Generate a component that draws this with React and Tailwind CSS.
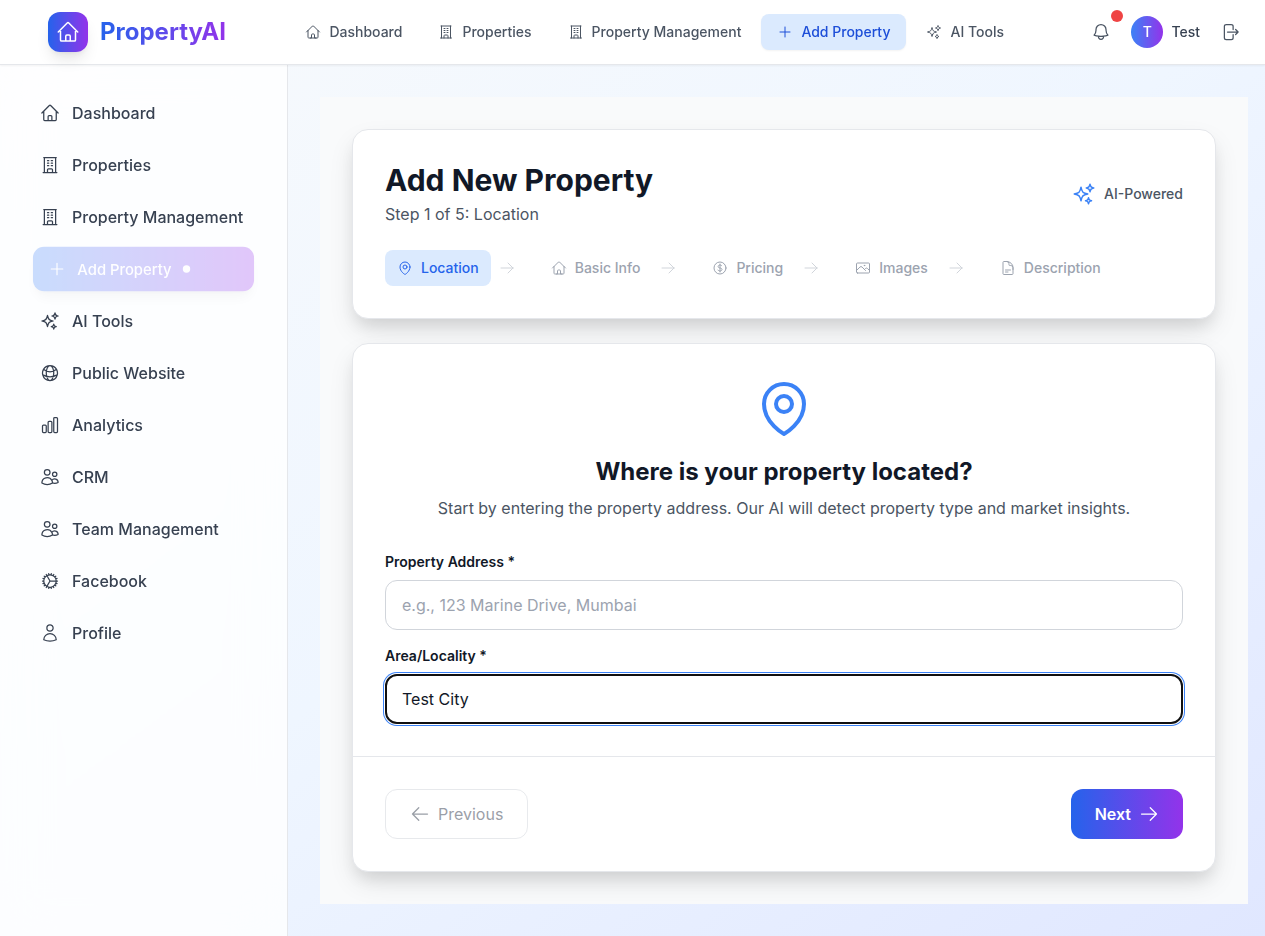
import {
  HiOutlineArrowLeft,
  HiOutlineArrowRight,
  HiOutlineArrowRightOnRectangle,
  HiOutlineBell,
  HiOutlineBuildingOffice,
  HiOutlineChartBar,
  HiOutlineCog,
  HiOutlineCurrencyDollar,
  HiOutlineDocumentText,
  HiOutlineGlobeAlt,
  HiOutlineHome,
  HiOutlineMapPin,
  HiOutlinePhoto,
  HiOutlinePlus,
  HiOutlineSparkles,
  HiOutlineUser,
  HiOutlineUsers,
} from "react-icons/hi2";

const topLinks = [
  { label: "Dashboard", icon: HiOutlineHome },
  { label: "Properties", icon: HiOutlineBuildingOffice },
  { label: "Property Management", icon: HiOutlineBuildingOffice },
  { label: "Add Property", icon: HiOutlinePlus, active: true },
  { label: "AI Tools", icon: HiOutlineSparkles },
];

const sideLinks = [
  { label: "Dashboard", icon: HiOutlineHome },
  { label: "Properties", icon: HiOutlineBuildingOffice },
  { label: "Property Management", icon: HiOutlineBuildingOffice },
  { label: "Add Property", icon: HiOutlinePlus, active: true },
  { label: "AI Tools", icon: HiOutlineSparkles },
  { label: "Public Website", icon: HiOutlineGlobeAlt },
  { label: "Analytics", icon: HiOutlineChartBar },
  { label: "CRM", icon: HiOutlineUsers },
  { label: "Team Management", icon: HiOutlineUsers },
  { label: "Facebook", icon: HiOutlineCog },
  { label: "Profile", icon: HiOutlineUser },
];

const steps = [
  { label: "Location", icon: HiOutlineMapPin },
  { label: "Basic Info", icon: HiOutlineHome },
  { label: "Pricing", icon: HiOutlineCurrencyDollar },
  { label: "Images", icon: HiOutlinePhoto },
  { label: "Description", icon: HiOutlineDocumentText },
];

function Header() {
  return (
    <header className="relative z-10 flex h-[65px] shrink-0 items-center border-b border-[#e5e7eb] bg-white/95 pr-[17px] pl-12 shadow-xs backdrop-blur-xl">
      <div className="flex w-[241.4px] shrink-0 items-center gap-3">
        <div className="flex size-10 items-center justify-center rounded-xl bg-linear-to-r/srgb from-[#2563eb] to-[#9333ea] text-white shadow-lg">
          <HiOutlineHome className="size-6" />
        </div>
        <span className="bg-linear-to-r/srgb from-[#2563eb] to-[#9333ea] bg-clip-text text-2xl font-bold text-transparent">
          PropertyAI
        </span>
      </div>
      <nav className="flex items-center gap-1">
        {topLinks.map(({ label, icon: Icon, active }) => (
          <a
            key={label}
            className={
              active
                ? "flex items-center gap-2 rounded-lg bg-[#dbeafe] px-4 py-2 text-sm font-medium whitespace-nowrap text-[#1d4ed8] shadow-xs"
                : "flex items-center gap-2 rounded-lg px-4 py-2 text-sm font-medium whitespace-nowrap text-[#4b5563]"
            }
          >
            <Icon className="size-4" />
            {label}
          </a>
        ))}
      </nav>
      <div className="ml-auto flex items-center">
        <button className="relative p-2 text-[#4b5563]">
          <HiOutlineBell className="size-5" />
          <span className="absolute -top-1 -right-1 size-3 rounded-full bg-[#ef4444]" />
        </button>
        <div className="ml-3 flex items-center gap-2">
          <div className="flex size-8 items-center justify-center rounded-full bg-linear-to-r/srgb from-[#3b82f6] to-[#9333ea] text-sm font-medium text-white">
            T
          </div>
          <span className="text-sm font-medium text-[#374151]">Test</span>
        </div>
        <button className="ml-3 p-2 text-[#4b5563]">
          <HiOutlineArrowRightOnRectangle className="size-5" />
        </button>
      </div>
    </header>
  );
}

function Sidebar() {
  return (
    <aside className="w-72 shrink-0 border-r border-[#e5e7eb] bg-white/80 px-6 pt-6 backdrop-blur-xl">
      <nav className="flex flex-col gap-1">
        {sideLinks.map(({ label, icon: Icon, active }) => (
          <a
            key={label}
            className={
              active
                ? "flex h-12 scale-[0.925] items-center gap-3 rounded-xl bg-linear-to-r/srgb from-[#3b82f6] to-[#9333ea] px-4 font-medium text-white opacity-[0.27] shadow-lg"
                : "flex h-12 items-center gap-3 rounded-xl px-4 font-medium whitespace-nowrap text-[#374151]"
            }
          >
            <Icon className="size-5 shrink-0" />
            {label}
            {active && <span className="size-2 rounded-full bg-white" />}
          </a>
        ))}
      </nav>
    </aside>
  );
}

function StepsCard() {
  return (
    <section className="rounded-2xl border border-[#e5e7eb] bg-white p-8 shadow-[0_10px_15px_-3px_rgba(0,0,0,0.08),0_12px_28px_-4px_rgba(0,0,0,0.12)]">
      <div className="flex items-center justify-between">
        <div>
          <h1 className="text-3xl font-bold text-[#111827]">Add New Property</h1>
          <p className="mt-1 text-[#4b5563]">Step 1 of 5: Location</p>
        </div>
        <div className="flex items-center gap-2">
          <HiOutlineSparkles className="size-6 text-[#3b82f6]" />
          <span className="text-sm font-medium text-[#4b5563]">AI-Powered</span>
        </div>
      </div>
      <ol className="mt-6 flex items-center gap-4">
        {steps.map(({ label, icon: Icon }, i) => (
          <li key={label} className="flex items-center">
            <div
              className={
                i === 0
                  ? "flex items-center gap-2 rounded-lg bg-[#dbeafe] px-3 py-2 text-sm font-medium text-[#2563eb]"
                  : "flex items-center gap-2 rounded-lg px-3 py-2 text-sm font-medium text-[#9ca3af]"
              }
            >
              <Icon className="size-4" />
              {label}
            </div>
            {i < steps.length - 1 && <HiOutlineArrowRight className="mx-2 size-4 text-[#d1d5db]" />}
          </li>
        ))}
      </ol>
    </section>
  );
}

function LocationForm() {
  return (
    <section className="rounded-2xl border border-[#e5e7eb] bg-white shadow-[0_10px_15px_-3px_rgba(0,0,0,0.08),0_12px_28px_-4px_rgba(0,0,0,0.12)]">
      <div className="p-8">
        <div className="flex flex-col items-center text-center">
          <HiOutlineMapPin className="size-16 text-[#3b82f6]" />
          <h2 className="mt-4 text-2xl font-bold text-[#111827]">Where is your property located?</h2>
          <p className="mt-2 text-[#4b5563]">
            Start by entering the property address. Our AI will detect property type and market insights.
          </p>
        </div>
        <label className="mt-8 block text-sm font-semibold text-[#111827]">Property Address *</label>
        <input
          type="text"
          placeholder="e.g., 123 Marine Drive, Mumbai"
          className="mt-2 block h-[50px] w-full rounded-xl border border-[#d1d5db] bg-white px-4 text-[#111827] outline-none placeholder:text-[#9ca3af]"
        />
        <label className="mt-4 block text-sm font-semibold text-[#111827]">Area/Locality *</label>
        <input
          type="text"
          defaultValue="Test City"
          className="mt-2 block h-[50px] w-full rounded-xl border-2 border-[#101010] bg-white px-[15px] text-[#111827] shadow-[0_0_0_1px_#fff,0_0_0_2px_#3b82f6] outline-none"
        />
      </div>
      <div className="flex items-center justify-between border-t border-[#e5e7eb] p-8">
        <button
          disabled
          className="flex h-[50px] items-center gap-2 rounded-xl border border-[#d1d5db] px-6 text-[#374151] opacity-50"
        >
          <HiOutlineArrowLeft className="size-5" />
          Previous
        </button>
        <button className="flex h-[50px] items-center gap-2 rounded-xl bg-linear-to-r/srgb from-[#2563eb] to-[#9333ea] px-6 font-semibold text-white">
          Next
          <HiOutlineArrowRight className="size-5" />
        </button>
      </div>
    </section>
  );
}

export default function App() {
  return (
    <div className="flex h-[936px] flex-col overflow-hidden bg-linear-to-br/srgb from-[#f8fafc] via-[#eff6ff] to-[#e0e7ff] font-['Inter',sans-serif]">
      <Header />
      <div className="flex min-h-0 flex-1">
        <Sidebar />
        <main className="min-w-0 flex-1 py-8 pr-[17px] pl-8">
          <div className="flex flex-col gap-6 overflow-hidden bg-[#f9fafb] p-8">
            <StepsCard />
            <LocationForm />
          </div>
        </main>
      </div>
    </div>
  );
}
